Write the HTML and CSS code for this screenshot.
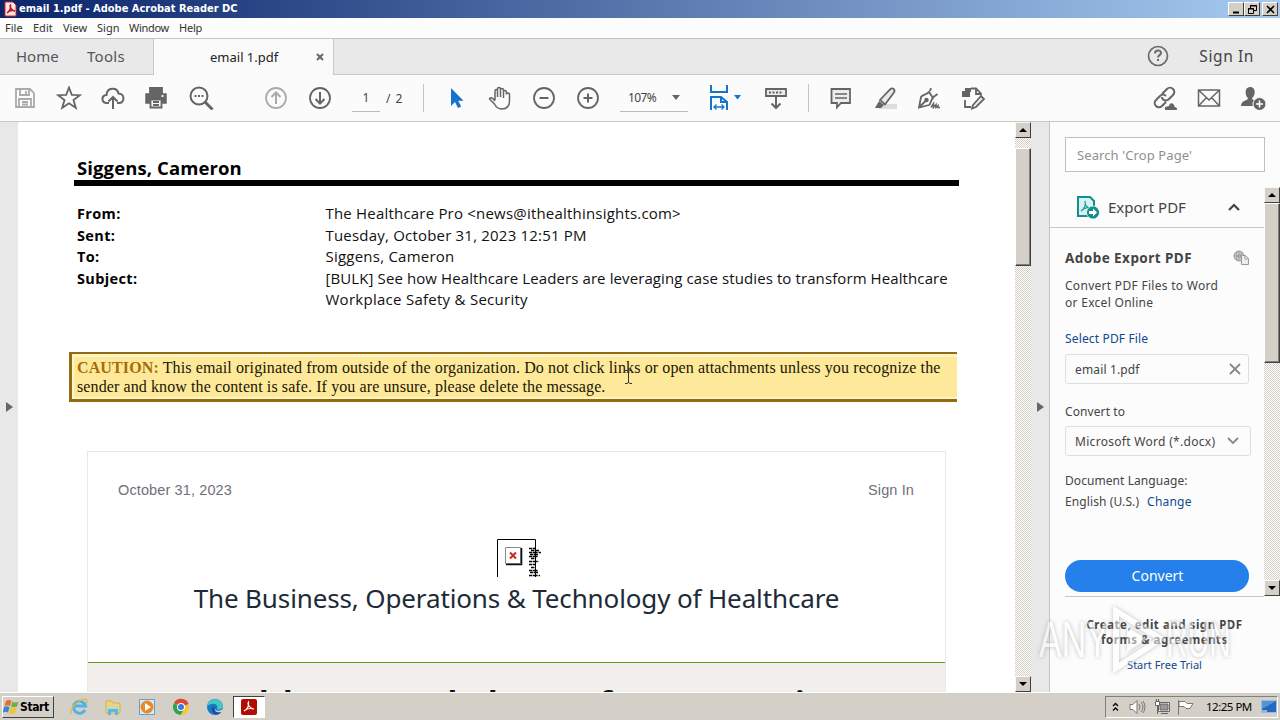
FILE: index.html
```html
<!DOCTYPE html>
<html lang="en">
<head>
<meta charset="utf-8">
<title>email 1.pdf - Adobe Acrobat Reader DC</title>
<link rel="stylesheet" href="styles.css">
</head>
<body>
<div class="screen">
  <header class="titlebar">
    <svg class="app-icon" width="13" height="16" viewBox="0 0 13 16"><path d="M1 1h8l3 3v11H1z" fill="#fbe9e8" stroke="#d3262b"/><path d="M3 12c3-2 4-5 3.500-8C5 5 8 10 11 10 8 9 5 10 3 12z" fill="none" stroke="#c8141c" stroke-width="1.500"/></svg>
    <span class="title-text">email 1.pdf - Adobe Acrobat Reader DC</span>
    <div class="win-buttons">
      <span class="win-btn"><svg width="15" height="13"><path d="M4 9.500h6" stroke="#000" stroke-width="2"/></svg></span>
      <span class="win-btn"><svg width="15" height="13" fill="none" stroke="#000"><path d="M5.500 5V2.500h6v5H9M5 3h7M3.500 5.500h5v5h-5zM3 6h6"/></svg></span>
      <span class="win-btn close"><svg width="15" height="13"><path d="M4 3l7 7M11 3l-7 7" stroke="#000" stroke-width="1.600"/></svg></span>
    </div>
  </header>
  <nav class="menubar"><span class="m1">File</span><span class="m2">Edit</span><span class="m3">View</span><span class="m4">Sign</span><span class="m5">Window</span><span class="m6">Help</span></nav>
  <div class="tabs">
    <div class="tabs-left"><span class="home">Home</span><span class="tools">Tools</span></div>
    <div class="tab-active"><span>email 1.pdf</span><svg width="8" height="8" viewBox="0 0 8 8"><path d="M1 1l6 6M7 1L1 7" stroke="#666" stroke-width="2"/></svg></div>
    <div class="tabs-right">
      <svg width="22" height="22" viewBox="0 0 22 22" fill="none" stroke="#6b6b6b" stroke-width="1.700"><circle cx="11" cy="11" r="9.500"/><path d="M8 8.500c0-4 6-4 6-.5 0 2.200-3 2-3 4.500M11 14v2" stroke-width="2"/></svg>
      <span>Sign In</span>
    </div>
  </div>
  <div class="toolbar">
    <svg class="ic faint" viewBox="0 0 24 24"><path d="M3 3h14l4 4v14H3zM7 3v6h9V3M13 5v3M6 21v-8h12v8M9 16h6M9 18.500h6"/></svg>
    <svg class="ic" viewBox="0 0 24 24"><path d="M12 1.500l2.800 7.400 8 .3-6.300 4.900 2.300 7.700-6.800-4.500-6.800 4.500 2.300-7.700L1.200 9.200l8-.3z"/></svg>
    <svg class="ic" viewBox="0 0 24 24"><path d="M8 17H6C0 17 0 9 5.500 9 6 1 16 1 17.500 7.500 24 7.500 24 17 18 17h-2M12 23V12M7.500 15.500L12 11l4.500 4.500" stroke-width="2"/></svg>
    <svg class="ic" viewBox="1 0 24 24"><path d="M6 2h12v5H6z" fill="#656565"/><path d="M2 8h20v9h-4v-4H6v4H2z" fill="#656565" stroke-width="1.500"/><path d="M6.500 13.500h11v8h-11z" fill="#fbfbfb"/><path d="M9 16h6M9 19h6"/><path d="M17.500 10h2" stroke="#fff"/></svg>
    <svg class="ic" viewBox="0 0 24 24"><circle cx="10" cy="10" r="8.500" stroke-width="2"/><path d="M16 16l7.500 7.500" stroke-width="3"/><path d="M5.500 10h2M9 10h2M12.500 10h2" stroke-width="2"/></svg>
    <svg class="ic faint up" viewBox="0 0 24 24"><circle cx="12" cy="12" r="10"/><path d="M12 18V7M7.500 11L12 6.500l4.500 4.500" stroke-width="2"/></svg>
    <svg class="ic" viewBox="0 0 24 24"><circle cx="12" cy="12" r="10"/><path d="M12 6v11M7.500 13l4.500 4.500 4.500-4.500" stroke-width="2"/></svg>
    <span class="page-no">1</span><span class="page-of">/ 2</span><i class="sep"></i>
    <svg class="ic pointer" viewBox="0 0 24 24"><path d="M7 2v18l4-4 3 6 3.200-1.500-3-5.800H19.500z" fill="#1473cf" stroke="none"/></svg>
    <svg class="ic" viewBox="0 0 24 24"><path d="M7 14V5c0-2 2.500-2 2.500 0v6-8c0-2 3-2 3 0v8-7c0-2 3-2 3 0v8-6c0-2 2.800-2 2.800 0v-.5l.2 3c0-2 3-2 3 0V15c0 5-3 8-8 8-4 0-5.500-2-7-5L1.500 13c0-2 2.500-1.500 3.500-.5l2 2.500" stroke-width="1.500"/></svg>
    <svg class="ic" viewBox="0 0 24 24"><circle cx="12" cy="12" r="10"/><path d="M7.500 12h9" stroke-width="2"/></svg>
    <svg class="ic" viewBox="0 0 24 24"><circle cx="12" cy="12" r="10"/><path d="M7.500 12h9M12 7.500v9" stroke-width="2"/></svg>
    <span class="zoom-level"><span>107%</span><i class="caret"></i></span>
    <svg class="fit" width="32" height="26" viewBox="0 0 32 26" fill="none" stroke="#1473cf" stroke-width="2"><path d="M2 0v7h16V0M2 25V12h10l6 5v8M12 12v5h6"/><path d="M5 22h10M7.500 19.500L5 22l2.500 2.500M12.500 19.500L15 22l-2.500 2.500" stroke-width="1.300"/><path d="M25 10h7l-3.500 4.500z" fill="#1473cf" stroke="none"/></svg>
    <svg class="ic scroll" viewBox="0 0 24 24"><path d="M2 3h20v7H2z" fill="#ececec"/><path d="M5 6.500h14" stroke-dasharray="2 1.500" stroke-width="2"/><path d="M12 11v11M7.500 17.500L12 22l4.500-4.500" stroke-width="2"/></svg>
    <i class="sep sep2"></i>
    <svg class="ic" viewBox="0 0 24 24"><path d="M2.500 3h18.500v14H12l-4 4.500V17H2.500z" fill="#ececec"/><path d="M6 8h12M6 12h12" stroke-width="1.400"/></svg>
    <svg class="ic" viewBox="0 0 24 24"><path d="M9 18h15v5H5z" fill="#ddd" stroke="none"/><path d="M7 14L17 3.500q2-2 3.800-.5 1.500 1.700 0 3.700L12 18.500z" fill="#e9e9e9"/><path d="M6 15l5 4-3 3H2z" fill="#656565" stroke="none"/></svg>
    <svg class="ic" viewBox="0 0 24 24"><path d="M12 6C9 9 5 9 4 11L2 21.500 12 19c2-1 1-4 4-7zM2 21.500l7-7M12 6l4 6M13 5l1-3M16.500 11l4-3" /><circle cx="9.500" cy="14" r="1.300" fill="#656565"/><path d="M14 21.500l2.500-4v4l2.500-3v3l2-2v2h2" stroke-width="1.500"/></svg>
    <svg class="ic" viewBox="0 0 24 24"><path d="M1 5h8v6H1zM4 2h6v4H4z" fill="#656565" stroke="none"/><path d="M10 2.500h5l5 5v2M15 3v5h5M4 14v7h6"/><path d="M12 19l8-9 3 3-8 8-4 1.500z" fill="#eee" stroke-width="1.800"/></svg>
    <svg class="ic link" viewBox="0 0 24 24"><path d="M9 8l5-5c4-4 10 2 6 6l-4 4c-3 3-7 1-7-2M13 10c-2-2-4-2-6 0l-4 4c-4 4 2 10 6 6l4-4" stroke-width="2"/><path d="M12 24v-3l4-1c1-5 6-2 5.500 1 3 0 3 3 2 3z" fill="#656565" stroke="none"/></svg>
    <svg class="ic" viewBox="0 0 24 24"><path d="M1.500 4h21v16h-21zM2 4.500L12 14 22 4.500M2 19.500l7.500-8M22 19.500l-7.500-8" stroke-width="1.500"/></svg>
    <svg class="ic" viewBox="0 0 24 24"><path d="M9 1c7 0 5 10 2 11 0 2 3 2 4 4l-1 4H0c0-6 7-5 7-8C4 10 3 1 9 1z" fill="#656565" stroke="none"/><circle cx="18.500" cy="18" r="6.500" fill="#656565" stroke="#fafafa" stroke-width="1"/><path d="M15 18h7M18.500 14.500v7" stroke="#fff" stroke-width="1.600"/></svg>
  </div>

  <div class="main">
    <div class="gutter left"><i class="tri"></i></div>
    <main class="doc">
      <h1 class="name">Siggens, Cameron</h1>
      <dl class="fields">
        <dt>From:</dt><dd class="f1">The Healthcare Pro &lt;news@ithealthinsights.com&gt;</dd>
        <dt>Sent:</dt><dd class="f2">Tuesday, October 31, 2023 12:51 PM</dd>
        <dt>To:</dt><dd class="f3">Siggens, Cameron</dd>
        <dt>Subject:</dt><dd class="f4">[BULK] See how Healthcare Leaders are leveraging case studies to transform Healthcare<br><span class="f5">Workplace Safety &amp; Security</span></dd>
      </dl>
      <div class="caution"><p><span class="c1"><b>CAUTION:</b> This email originated from outside of the organization. Do not click links or open attachments unless you recognize the</span><br><span class="c2">sender and know the content is safe. If you are unsure, please delete the message.</span></p>
        <svg class="ibeam" width="9" height="16" viewBox="0 0 9 16" fill="none" stroke="#333"><path d="M1 1.500h2l1.500 1L6 1.500h2M4.500 2v12M1 14.500h2l1.500-1 1.500 1h2"/></svg>
      </div>
      <section class="letter">
        <div class="letter-top"><span>October 31, 2023</span><span>Sign In</span></div>
        <svg class="broken" width="46" height="38" viewBox="0 0 46 38"><path d="M.5 38V.5h38V38" fill="none" stroke="#000"/><path d="M8.500 8.500h15v16h-15z" fill="#fff" stroke="#889"/><path d="M9 25.500h15.500V9" fill="none" stroke="#111" stroke-width="1.600"/><path d="M13 13.500l6 6M19 13.500l-6 6" stroke="#d22620" stroke-width="2"/><path d="M32 9.500h6M34 11.500h8M32 13.500h12M33 15.500h8M32 17.500h9M34 19.500h4M32 22.500h10M32 25.500h7M34 28.500h4M32 31.500h9M33 33.500h8M32 36.500h11" stroke="#000" stroke-width="1.400" stroke-dasharray="3 .6 5 1"/></svg>
        <h2><span>The Business, Operations &amp; Technology of Healthcare</span></h2>
        <div class="headline"><span>Healthcare Workplace Safety &amp; Security</span></div>
      </section>
    </main>
    <div class="scrollbar doc-scroll"><span class="sb-btn"><i></i></span><span class="thumb"></span><span class="sb-btn down"><i></i></span></div>
    <div class="gutter right"><i class="tri"></i></div>
    <aside class="panel">
      <div class="search"><span>Search 'Crop Page'</span></div>
      <div class="panel-mid">
        <div class="panel-col">
          <div class="tool-head">
            <svg width="24" height="24" viewBox="0 0 24 24"><path d="M2 2h12l4 4v15H2z" fill="#d5f3f2" stroke="#168c8c" stroke-width="2"/><path d="M5 16c4-3 5-6 4-10 0 6 3 7 6 7-4-1-7 0-10 3z" fill="none" stroke="#279a9a" stroke-width="1.200"/><circle cx="17" cy="17.500" r="6.500" fill="#168c8c" stroke="#fff" stroke-width=".7"/><path d="M13 16h4v-2.500l4 4-4 4V19h-4z" fill="#fff"/></svg>
            <span>Export PDF</span>
            <svg class="chev" width="12" height="8" viewBox="0 0 12 8"><path d="M1 7l5-5 5 5" fill="none" stroke="#444" stroke-width="2.200"/></svg>
          </div>
          <div class="tool-body">
            <div class="export-title"><b>Adobe Export PDF</b><svg width="17" height="16" viewBox="0 0 17 16" fill="none" stroke="#999"><circle cx="6" cy="6" r="5" fill="#ccc"/><path d="M1 6h10M6 1v10M3 2q3 4 0 8M9 2q-3 4 0 8"/><path d="M8.500 5.500h4l3 3v6h-7zM12 6v3h3" fill="#eee"/></svg></div>
            <p class="desc"><span class="p1">Convert PDF Files to Word</span><br><span class="p2">or Excel Online</span></p>
            <a class="select-link">Select PDF File</a>
            <div class="field file"><span>email 1.pdf</span><svg width="12" height="12" viewBox="0 0 12 12"><path d="M1 1l10 10M11 1L1 11" stroke="#888" stroke-width="1.800"/></svg></div>
            <div class="label">Convert to</div>
            <div class="field format"><span>Microsoft Word (*.docx)</span><svg width="12" height="8" viewBox="0 0 12 8"><path d="M1 1l5 5 5-5" fill="none" stroke="#888" stroke-width="1.800"/></svg></div>
            <div class="lang-label">Document Language:</div>
            <div class="lang"><span>English (U.S.)</span><a>Change</a></div>
            <button class="convert"><span>Convert</span></button>
          </div>
        </div>
        <div class="scrollbar panel-scroll"><span class="sb-btn"><i></i></span><span class="thumb"></span><span class="sb-btn down"><i></i></span></div>
      </div>
      <div class="promo"><b><span class="pr1">Create, edit and sign PDF</span><br><span class="pr2">forms &amp; agreements</span></b><a>Start Free Trial</a></div>
    </aside>
  </div>

  <footer class="taskbar">
    <div class="start"><svg width="17" height="16" viewBox="0 0 17 16"><path d="M3 2q3-2 5.500 0L7 7Q4 5.500 1.500 7z" fill="#e76b2d"/><path d="M9.500 2.500q3 2 6 0L14 7.500q-3 1.500-6 0z" fill="#6cb33e"/><path d="M1 8q3-1.500 5.500.3L5 13.500Q2.500 12-.2 13.500z" fill="#3a83cf"/><path d="M7.500 8.500q3 1.500 6 0L12 14q-3 1.500-6 0z" fill="#f2c230"/></svg><span>Start</span></div>
    <div class="quick">
      <svg width="18" height="18" viewBox="0 0 18 18"><path d="M15 12a6 6 0 1 1 .5-4H5" fill="none" stroke="#4bb4e6" stroke-width="3"/><path d="M1 16C-1 10 10 0 16 1.500c2 1 1 3 0 4" fill="none" stroke="#e6b83c" stroke-width="1.300"/></svg>
      <svg width="18" height="18" viewBox="0 0 18 18"><path d="M2 3h6l1 2h7v10H2z" fill="#eed479" stroke="#d5b24c"/><path d="M3 9h12v3H3z" fill="#a8dcf1"/><path d="M4 17v-6h10v6h-3v-3H7v3z" fill="#61b6dd"/></svg>
      <svg width="18" height="18" viewBox="0 0 18 18"><path d="M1.500 1.500h15v15h-15z" fill="#d6ebfb" stroke="#5da1d5"/><circle cx="9" cy="9" r="6.500" fill="#ee8824"/><path d="M7 5l6 4-6 4z" fill="#fff"/></svg>
      <svg width="18" height="18" viewBox="0 0 18 18"><circle cx="9" cy="9" r="8" fill="#f6c630"/><path d="M9 9L2 5a8 8 0 0 1 14.500 1z" fill="#e04436"/><path d="M2 5a8 8 0 0 0 6.500 12L12 11 8 9z" fill="#2ea455"/><circle cx="9" cy="9" r="4" fill="#fff"/><circle cx="9" cy="9" r="3" fill="#347de0"/></svg>
      <svg width="18" height="18" viewBox="0 0 18 18"><circle cx="9" cy="9" r="8" fill="#1878c8"/><path d="M1 8C3-1 16-1 17 8c0 4-4 4-6 3 2-5-4-7-10-3z" fill="#43c8c6"/><path d="M9 9c-2 5 3 7 7 4-2 4-8 5-10 0-1-3 1-5 3-4z" fill="#164f9f"/><path d="M9 9c-1 4 4 5 8 2l-1 3c-4 1-8 0-7-5z" fill="#d4d0c8"/></svg>
    </div>
    <div class="task-active"><svg width="16" height="16" viewBox="0 0 16 16"><rect width="16" height="16" rx="2" fill="#b30b00"/><path d="M3 12c4-2 5-5 4.500-9C6 5 9 10 13 10 9 9 5 10 3 12z" fill="none" stroke="#fff" stroke-width="1.200"/></svg></div>
    <div class="tray">
      <svg width="7" height="10" viewBox="0 0 7 10" fill="none" stroke="#000" stroke-width="1.300"><path d="M1 4l2.500-2.500L6 4M1 8.500L3.500 6 6 8.500"/></svg>
      <svg class="t2" width="17" height="16" viewBox="0 0 17 16" fill="#fff" stroke="#777"><path d="M1 5.500h3l4-4v13l-4-4H1z"/><path d="M10 5q2 3 0 6M12 3q4 5 0 10M14 2q4 6 0 12" fill="none"/></svg>
      <svg class="t3" width="16" height="16" viewBox="0 0 16 16" fill="#fff" stroke="#666"><path d="M4.500 3.500h11v9h-11zM7 14.500h7"/><path d="M6 5h8v6H6z" fill="#999"/><path d="M1.500 2.500h4v4h-4zM2.500 0v2M4.500 0v2M3.500 7v8"/></svg>
      <svg class="t4" width="17" height="16" viewBox="0 0 17 16" fill="#fff" stroke="#777"><path d="M1.500 1v15M2 2.500h6l2 2h6l-3 5H9l-2-2H2z"/></svg>
      <span class="clock">12:25 PM</span>
      <svg class="t5" width="16" height="13" viewBox="0 0 16 13"><path d="M.5.500h15v12H.5z" fill="#2668bd" stroke="#9bbce0"/><path d="M1 1h14L1 9z" fill="#5593d9"/><path d="M1 11h5" stroke="#fff"/></svg>
    </div>
  </footer>
  <div class="watermark"><span class="w1">ANY</span><svg width="56" height="66" viewBox="0 0 56 66"><path d="M6 4l45 28L6 61z" fill="none" stroke="#fff" stroke-width="6"/><path d="M17 20l20 12-20 13z" fill="#fff"/></svg><span class="w2">RUN</span></div>
</div>
</body>
</html>
```
FILE: styles.css
```css
* { box-sizing: border-box; }
body { margin: 0; font-family: "Noto Sans", "Open Sans", sans-serif; color: #444; }
svg { display: block; flex: none; }
.screen { position: relative; width: 1280px; height: 720px; overflow: hidden; display: flex; flex-direction: column; background: #fafafa; white-space: nowrap; }

/* Title bar and menu */
.titlebar { height: 18px; flex: none; display: flex; align-items: center; padding: 0 2px 0 4px; background: linear-gradient(90deg, #0a246a, #a6caf0); color: #fff; }
.title-text { margin-left: 2px; font: bold 11px/18px "DejaVu Sans Condensed", sans-serif; letter-spacing: 0; }
.win-buttons { margin-left: auto; display: flex; }
.win-btn { width: 16px; height: 14px; background: #d4d0c8; border: 1px solid; border-color: #fff #404040 #404040 #fff; }
.win-btn.close { margin-left: 2px; }
.menubar { height: 20px; flex: none; display: flex; background: #fcfcfc; font: 11px/20px "Noto Sans", sans-serif; padding-left: 5px; color: #333; }
.menubar span { flex: none; }
.m1 { width: 28px; } .m2 { width: 30px; } .m3 { width: 34px; } .m4 { width: 32px; } .m5 { width: 50px; letter-spacing: -.3px; }
.m6 { letter-spacing: -.2px; }

/* Tabs */
.tabs { height: 37px; flex: none; display: flex; background: #e9e9e9; border-top: 1px solid #c4c4c4; }
.tabs-left { width: 154px; padding-left: 16px; border-right: 1px solid #c8c8c8; border-bottom: 1px solid #c8c8c8; font-size: 15px; line-height: 35px; color: #555; display: flex; }
.home { width: 71px; }
.tools { letter-spacing: .3px; }
.tab-active { width: 180px; display: flex; align-items: center; background: #fafafa; border-right: 1px solid #c8c8c8; padding: 0 9px 0 56px; justify-content: space-between; font-size: 13px; color: #222; }
.tabs-right { flex: 1; display: flex; align-items: center; justify-content: flex-end; gap: 30px; padding: 0 26px 1px 0; border-bottom: 1px solid #c8c8c8; font-size: 15.500px; letter-spacing: .6px; color: #444; }

/* Toolbar */
.toolbar { height: 47px; flex: none; display: flex; align-items: center; padding-left: 3px; background: #fbfbfb; border-bottom: 1px solid #c8c8c8; color: #444; font-size: 12px; }
.ic { width: 44px; height: 24px; fill: none; stroke: #656565; stroke-width: 1.800; }
.faint { stroke: #ababab; }
.up { margin-left: 31px; }
.page-no { width: 28px; height: 28px; margin-left: 10px; border-bottom: 1px solid #bbb; text-align: center; line-height: 28px; }
.page-of { width: 43px; padding-left: 6px; letter-spacing: 1px; }
.sep { width: 1px; height: 28px; background: #c4c4c4; }
.pointer { margin-left: 10px; }
.zoom-level { width: 68px; height: 28px; margin-left: 10px; padding: 0 8px; border-bottom: 1px solid #bbb; display: flex; align-items: center; justify-content: space-between; letter-spacing: -.6px; }
.caret { border: 4px solid transparent; border-top: 5px solid #666; border-bottom: 0; }
.fit { margin-left: 21px; }
.scroll { margin-left: 13px; }
.sep2 { margin: 0 10px; }
.link { margin-left: 148px; }

/* Main area */
.main { height: 570px; flex: none; display: flex; }
.gutter { background: #e8e8e8; display: flex; align-items: center; }
.left { width: 18px; padding-left: 6px; }
.right { width: 19px; padding-left: 6px; border-right: 1px solid #c4c4c4; }
.tri { border: 5.500px solid transparent; border-left: 7px solid #666; border-right: 0; }
.doc { width: 997px; height: 570px; overflow: hidden; background: #fff; color: #111; font-family: "Open Sans", "Noto Sans", sans-serif; }
.name { width: 885px; height: 64px; margin: 0 0 0 56px; padding: 33px 0 0 3px; border-bottom: 6px solid #000; font-size: 18.500px; line-height: 26px; letter-spacing: .1px; color: #000; }
.fields { margin: 17px 0 0 59px; display: grid; grid-template-columns: 248.500px auto; font-size: 15px; line-height: 21.600px; }
.fields dt { font-weight: bold; font-size: 14.500px; letter-spacing: .35px; color: #000; }
.fields dd { margin: 0; }
.f1, .f2 { letter-spacing: .2px; }
.f3 { letter-spacing: .23px; }
.f4 { letter-spacing: .1px; }
.f5 { letter-spacing: .27px; }
.caution { position: relative; width: 888px; height: 50px; margin: 41px 0 0 51px; border: solid #936b10; border-width: 2px 0 3px 3px; padding: 3px 0 2px 2px; background: #fff3c8; }
.caution p { margin: 0; height: 40px; padding: 1px 3px; background: #fee99a; font: 16px/19px "Liberation Serif", serif; color: #1a1605; }
.caution b { color: #a46c0c; }
.c1 { letter-spacing: .12px; }
.c2 { letter-spacing: .1px; }
.ibeam { position: absolute; left: 552px; top: 15px; }
.letter { width: 859px; height: 260px; margin: 49px 0 0 69px; border: 1px solid #e8e8e8; border-bottom: 0; }
.letter-top { display: flex; justify-content: space-between; padding: 28px 31px 0 30px; font: 14.500px/20px "Liberation Sans", sans-serif; letter-spacing: .12px; color: #707078; }
.broken { margin: 39px 0 0 409px; }
.letter h2 { margin: 0; height: 85px; padding-top: 1px; text-align: center; font: 26px/40px "Noto Sans", sans-serif; letter-spacing: -.13px; color: #1d2b38; }
.headline { height: 60px; border-top: 1px solid #5e9f1e; background: #f3efed; text-align: center; font: bold 32px/44px "Noto Sans", sans-serif; letter-spacing: .26px; color: #111; padding-top: 18px; }

/* Scrollbars */
.scrollbar { width: 16px; display: flex; flex-direction: column; background: repeating-conic-gradient(#d4d0c8 0 25%, #fff 0 50%) 0 0 / 2px 2px; }
.sb-btn { width: 16px; height: 16px; flex: none; background: #d4d0c8; border: 1px solid; border-color: #f8f8f8 #404040 #404040 #f8f8f8; display: flex; align-items: center; justify-content: center; }
.sb-btn i { border: 4px solid transparent; border-top: 0; border-bottom: 4px solid #000; }
.sb-btn.down { margin-top: auto; }
.sb-btn.down i { border-top: 4px solid #000; border-bottom: 0; }
.thumb { width: 16px; background: #d4d0c8; border: 1px solid; border-color: #fff #404040 #404040 #fff; box-shadow: inset -1px -1px #808080; }
.doc-scroll .thumb { margin-top: 10px; height: 118px; }

/* Tools panel */
.panel { width: 230px; background: #fcfcfc; display: flex; flex-direction: column; font-size: 12px; color: #444; }
.search { width: 200px; height: 35px; margin: 15px 0 0 15px; border: 1px solid #c0c0c0; background: #fff; padding-left: 11px; line-height: 34px; font-size: 13px; letter-spacing: .1px; color: #909090; }
.panel-mid { height: 409px; margin-top: 15px; display: flex; }
.panel-col { width: 214px; }
.panel-scroll { width: 16px; }
.panel-scroll .thumb { height: 160px; }
.tool-head { height: 41px; display: flex; align-items: center; padding: 0 24px 0 26px; border-bottom: 1px solid #c8c8c8; font-size: 15px; }
.tool-head span { margin-left: 8px; }
.chev { margin-left: auto; }
.tool-body { padding: 20px 0 0 15px; }
.export-title { width: 185px; display: flex; justify-content: space-between; align-items: center; height: 20px; font-size: 13.500px; line-height: 20px; letter-spacing: .45px; }
.desc { margin: 9px 0 0; line-height: 17px; letter-spacing: .29px; }
a { color: #10498d; }
.select-link { display: block; margin-top: 19px; line-height: 18px; letter-spacing: .15px; }
.field { height: 30px; border: 1px solid #dedede; border-radius: 3px; display: flex; align-items: center; justify-content: space-between; padding: 0 7px 0 9px; }
.file { width: 184px; margin-top: 6px; letter-spacing: .15px; }
.label { margin-top: 19px; line-height: 18px; letter-spacing: .1px; }
.format { width: 186px; margin-top: 5px; padding-right: 11px; letter-spacing: .3px; }
.lang-label { margin-top: 16px; line-height: 18px; letter-spacing: .07px; }
.lang { margin-top: 3px; line-height: 18px; display: flex; gap: 8px; letter-spacing: .1px; }
.lang a { letter-spacing: .2px; }
.convert { display: block; width: 184px; height: 32px; margin-top: 49px; padding: 0 0 1px 1px; border: 0; border-radius: 16px; background: #2680eb; color: #fff; font: 14px/30px "Noto Sans", sans-serif; }
.promo { width: 199px; margin-left: 15px; border-top: 1px solid #c8c8c8; height: 95px; padding-top: 20px; text-align: center; line-height: 15px; font-size: 11.500px; letter-spacing: .52px; }
.promo a { display: block; margin-top: 10px; font-size: 11px; line-height: 16px; letter-spacing: 0; }

/* Taskbar */
.taskbar { height: 28px; flex: none; display: flex; align-items: center; background: #d4d0c8; border-top: 1px solid #fff; color: #000; padding: 1px 2px; }
.start { width: 52px; height: 22px; display: flex; align-items: center; border: 1px solid; border-color: #fff #404040 #404040 #fff; font: bold 12px/20px "DejaVu Sans Condensed", sans-serif; letter-spacing: -.4px; }
.quick { display: flex; gap: 16px; margin-left: 16px; }
.task-active { width: 32px; height: 22px; margin-left: 9px; display: flex; align-items: center; justify-content: center; background: #fff; border: 1px solid; border-color: #404040 #fff #fff #404040; }
.tray { margin-left: auto; width: 173px; height: 22px; display: flex; align-items: center; border: 1px solid; border-color: #808080 #fff #fff #808080; padding-left: 6px; font-size: 11.500px; }
.t2 { margin-left: 10px; } .t3 { margin-left: 8px; } .t4 { margin-left: 7px; }
.clock { width: 52px; margin-left: 12px; letter-spacing: -.5px; }
.t5 { margin-left: 3px; }

.watermark { position: absolute; left: 1039px; top: 607px; display: flex; align-items: center; opacity: .52; filter: drop-shadow(0 0 2px #888); font: 50px/66px "Liberation Sans", sans-serif; color: #fff; }
.watermark span { transform-origin: left; }
.w1 { width: 71px; transform: scaleX(.68); }
.w2 { width: 66px; transform: scaleX(.6); }
```
